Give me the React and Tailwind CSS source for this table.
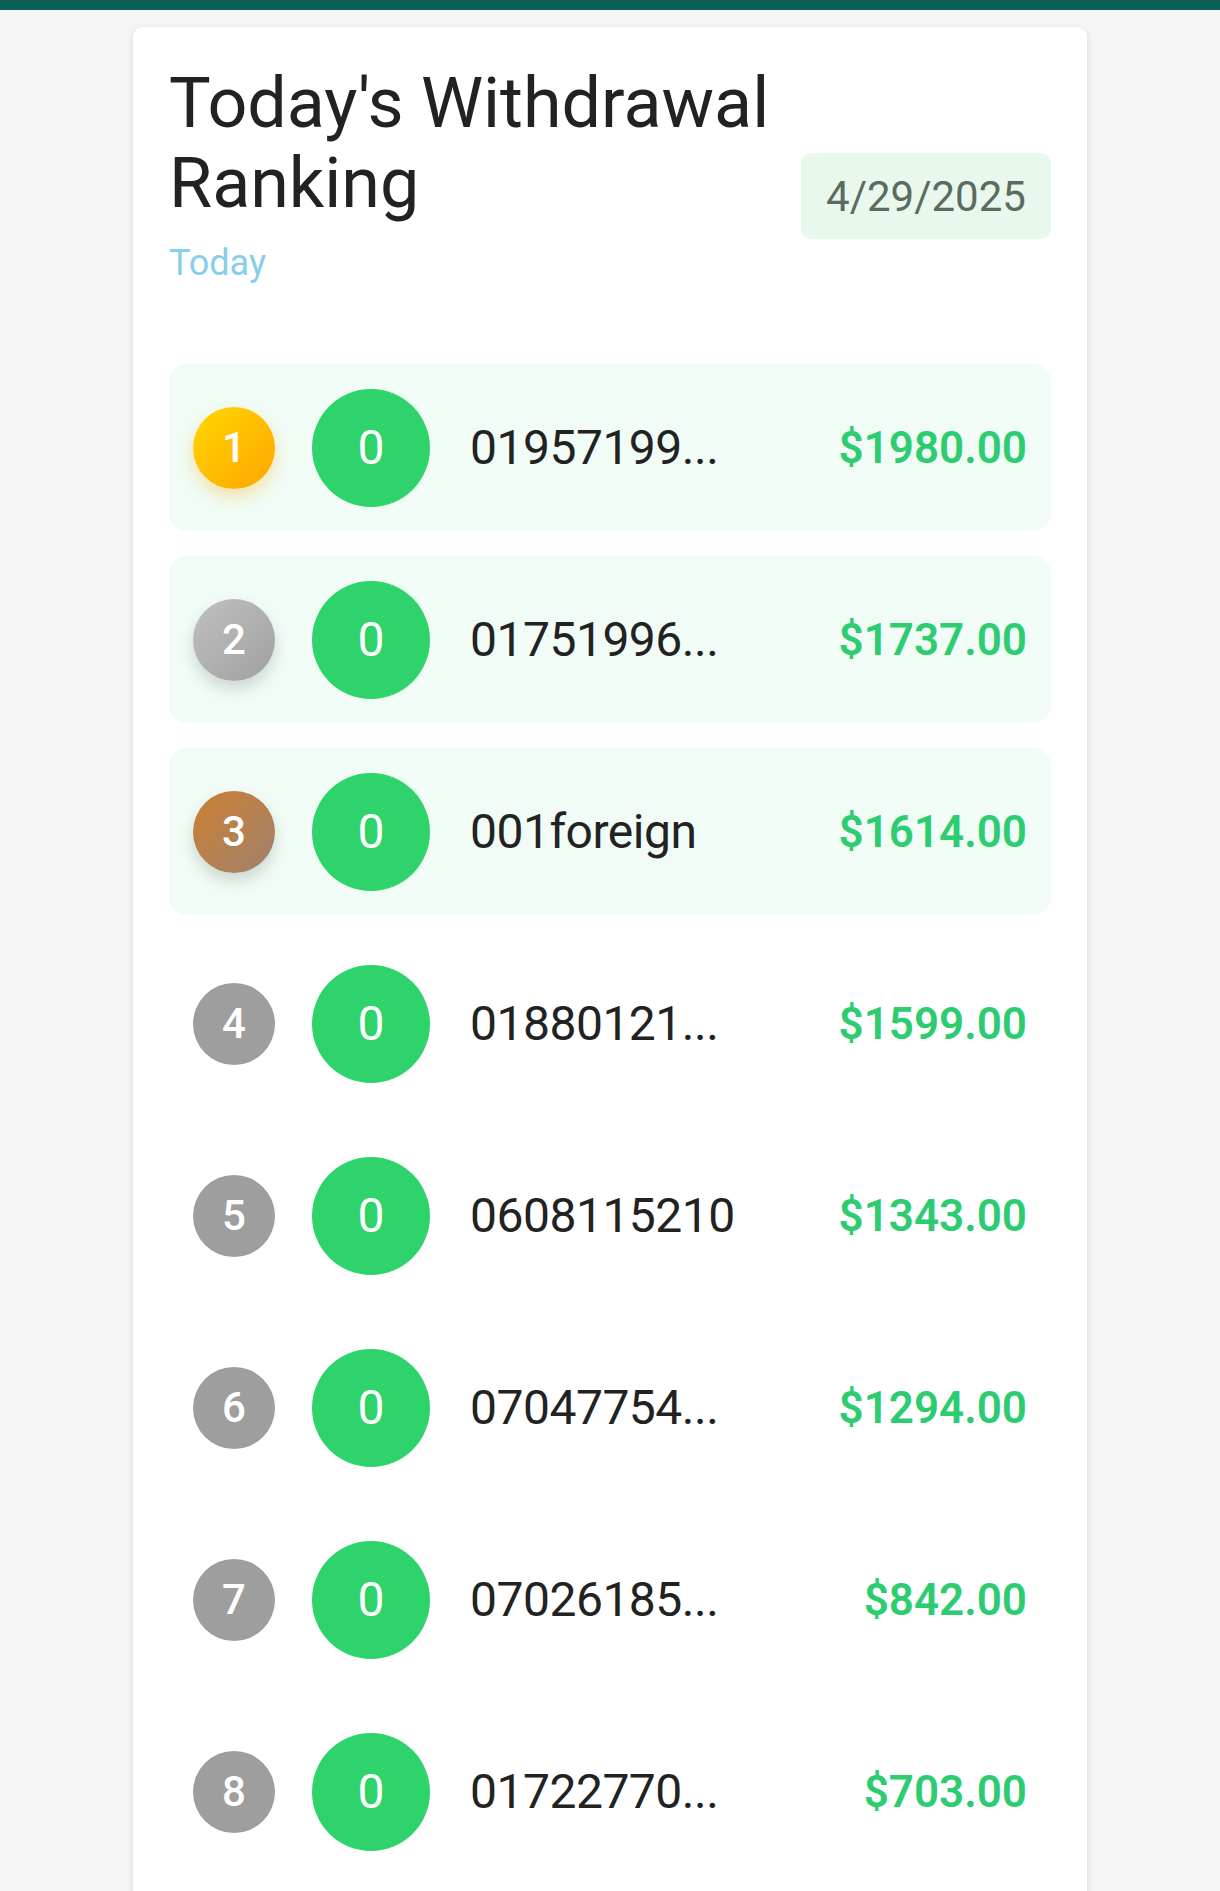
import React from 'react';

const rows = [
  { rank: 1, name: '01957199...', amount: '$1980.00' },
  { rank: 2, name: '01751996...', amount: '$1737.00' },
  { rank: 3, name: '001foreign', amount: '$1614.00' },
  { rank: 4, name: '01880121...', amount: '$1599.00' },
  { rank: 5, name: '0608115210', amount: '$1343.00' },
  { rank: 6, name: '07047754...', amount: '$1294.00' },
  { rank: 7, name: '07026185...', amount: '$842.00' },
  { rank: 8, name: '01722770...', amount: '$703.00' },
];

const rankStyles = {
  1: 'bg-[linear-gradient(135deg,#ffd700,#ffa500)] shadow-[0_8px_16px_rgba(255,170,0,0.3)]',
  2: 'bg-[linear-gradient(135deg,#c0c0c0,#a0a0a0)] shadow-[0_8px_16px_rgba(0,0,0,0.15)]',
  3: 'bg-[linear-gradient(135deg,#cd7f32,#a0826d)] shadow-[0_8px_16px_rgba(0,0,0,0.15)]',
};

function RankRow({ row }) {
  const top = row.rank <= 3;
  return (
    <div className={`flex items-center h-[167px] px-6 rounded-[18px] ${top ? 'bg-[#f0fcf5]' : ''}`}>
      <div className={`w-[82px] h-[82px] rounded-full flex items-center justify-center text-white text-[42px] font-medium shrink-0 ${rankStyles[row.rank] || 'bg-[#9e9e9e]'}`}>
        {row.rank}
      </div>
      <div className="w-[118px] h-[118px] ml-[37px] rounded-full bg-[#2ed36b] flex items-center justify-center text-white text-[48px] shrink-0">
        0
      </div>
      <div className="ml-[40px] flex-1 text-[48px] tracking-[-0.5px] text-[#222]">{row.name}</div>
      <div className="text-[44px] font-semibold text-[#2ecc71]">{row.amount}</div>
    </div>
  );
}

export default function App() {
  return (
    <div className="min-h-[1891px] bg-[#f5f5f5] font-['Roboto',sans-serif]">
      <div className="h-[10px] bg-[#0a5f57]" />
      <div className="mx-[133px] mt-[17px] bg-white rounded-[10px] shadow-[0_2px_6px_rgba(0,0,0,0.12)] p-9">
        {/* Header */}
        <div className="flex items-start justify-between mb-[77px]">
          <div>
            <h1 className="text-[70px] leading-[80px] text-[#222] w-[630px]">Today's Withdrawal Ranking</h1>
            <p className="mt-[16px] text-[36px] leading-[48px] text-[#87ceeb]">Today</p>
          </div>
          <div className="mt-[90px] w-[250px] h-[86px] rounded-[10px] bg-[#e8f8ec] flex items-center justify-center text-[42px] text-[#5a6b5f]">
            4/29/2025
          </div>
        </div>

        {/* List */}
        <div className="flex flex-col gap-[25px]">
          {rows.map(r => <RankRow key={r.rank} row={r} />)}
        </div>
      </div>
    </div>
  );
}
